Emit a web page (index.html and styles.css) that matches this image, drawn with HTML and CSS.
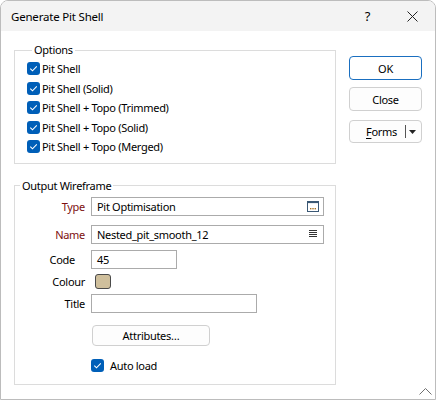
FILE: index.html
```html
<!DOCTYPE html>
<html>
<head>
<meta charset="utf-8">
<link rel="stylesheet" href="styles.css">
</head>
<body>
<div class="window">
  <div class="titlebar">
    <div class="title">Generate Pit Shell</div>
    <div class="tbtn">?</div>
    <div class="tbtn">
      <svg width="11" height="11" viewBox="0 0 11 11"><path d="M0.5 0.5 L10.5 10.5 M10.5 0.5 L0.5 10.5" stroke="#222" stroke-width="1" fill="none"/></svg>
    </div>
  </div>
  <div class="body">
    <div class="main">
      <fieldset class="options">
        <legend>Options</legend>
        <div class="chk-row"><span class="chk"><svg width="13" height="13" viewBox="0 0 13 13"><path d="M3.3 6.6 L5.5 8.8 L9.8 4.3" stroke="#fff" stroke-width="1.1" fill="none"/></svg></span><span>Pit Shell</span></div>
        <div class="chk-row"><span class="chk"><svg width="13" height="13" viewBox="0 0 13 13"><path d="M3.3 6.6 L5.5 8.8 L9.8 4.3" stroke="#fff" stroke-width="1.1" fill="none"/></svg></span><span>Pit Shell (Solid)</span></div>
        <div class="chk-row"><span class="chk"><svg width="13" height="13" viewBox="0 0 13 13"><path d="M3.3 6.6 L5.5 8.8 L9.8 4.3" stroke="#fff" stroke-width="1.1" fill="none"/></svg></span><span>Pit Shell + Topo (Trimmed)</span></div>
        <div class="chk-row"><span class="chk"><svg width="13" height="13" viewBox="0 0 13 13"><path d="M3.3 6.6 L5.5 8.8 L9.8 4.3" stroke="#fff" stroke-width="1.1" fill="none"/></svg></span><span>Pit Shell + Topo (Solid)</span></div>
        <div class="chk-row"><span class="chk"><svg width="13" height="13" viewBox="0 0 13 13"><path d="M3.3 6.6 L5.5 8.8 L9.8 4.3" stroke="#fff" stroke-width="1.1" fill="none"/></svg></span><span>Pit Shell + Topo (Merged)</span></div>
      </fieldset>
      <fieldset class="output">
        <legend>Output Wireframe</legend>
        <div class="row r-type">
          <label class="lbl req">Type</label>
          <div class="input wide"><span class="val">Pit Optimisation</span>
            <svg class="ico-browse" width="12" height="11" viewBox="0 0 12 11"><rect x="0.5" y="0.5" width="11" height="10" fill="#fff" stroke="#3a5875" stroke-width="1"/><rect x="0.5" y="0.5" width="11" height="1.6" fill="#3a5875"/><rect x="3" y="7" width="1.4" height="1.4" fill="#a87324"/><rect x="5.3" y="7" width="1.4" height="1.4" fill="#a87324"/><rect x="7.6" y="7" width="1.4" height="1.4" fill="#a87324"/></svg>
          </div>
        </div>
        <div class="row r-name">
          <label class="lbl req">Name</label>
          <div class="input wide"><span class="val">Nested_pit_smooth_12</span>
            <svg class="ico-list" width="8" height="8" viewBox="0 0 8 8"><path d="M0 0.5 H8 M0 2.5 H8 M0 4.5 H8 M0 6.5 H8" stroke="#333" stroke-width="1"/></svg>
          </div>
        </div>
        <div class="row r-code">
          <label class="lbl lbl-code">Code</label>
          <div class="input code"><span class="val">45</span></div>
        </div>
        <div class="row r-colour">
          <label class="lbl">Colour</label>
          <span class="swatch"></span>
        </div>
        <div class="row r-title">
          <label class="lbl">Title</label>
          <div class="input ttl"></div>
        </div>
        <div class="row r-attr">
          <div class="btn attr">Attributes…</div>
        </div>
        <div class="row r-auto">
          <span class="chk"><svg width="13" height="13" viewBox="0 0 13 13"><path d="M3.3 6.6 L5.5 8.8 L9.8 4.3" stroke="#fff" stroke-width="1.1" fill="none"/></svg></span><span class="auto-lbl">Auto load</span>
        </div>
      </fieldset>
    </div>
    <div class="side">
      <div class="btn ok">OK</div>
      <div class="btn close">Close</div>
      <div class="btn forms"><span class="ftxt"><u>F</u>orms</span><span class="divider"></span><svg class="arrow" width="7" height="4" viewBox="0 0 7 4"><path d="M0 0 H7 L3.5 4 Z" fill="#222"/></svg></div>
    </div>
  </div>
  <svg class="grip" width="13" height="7" viewBox="0 0 13 7"><polyline points="0.5,6.5 6.5,0.5 12.5,6.5" fill="none" stroke="#707070" stroke-width="1"/></svg>
</div>
</body>
</html>
```

FILE: styles.css
```css
* { box-sizing: border-box; }
html, body { margin: 0; padding: 0; background: #fff; }
body {
  font-family: "Noto Sans", "Open Sans", sans-serif;
  font-size: 11px;
  letter-spacing: -0.3px;
  color: #000;
}
.window {
  position: relative;
  width: 436px;
  height: 400px;
  border: 1px solid #bcbcbc;
  border-radius: 8px 8px 0 0;
  overflow: hidden;
  display: flex;
  flex-direction: column;
  background: #fff;
}
.titlebar {
  flex: none;
  height: 30px;
  background: #f3f3f3;
  display: flex;
  align-items: center;
  padding-left: 10px;
}
.title { flex: 1; font-size: 11.5px; letter-spacing: -0.2px; }
.tbtn {
  width: 45px;
  height: 30px;
  display: flex;
  align-items: center;
  justify-content: center;
  font-size: 13px;
}
.body {
  flex: 1;
  display: flex;
  padding: 11px 0 0 13px;
}
.main { width: 322px; flex: none; }
fieldset {
  margin: 0;
  padding: 0;
  border: 1px solid #dcdcdc;
  min-width: 0;
}
legend {
  padding: 0 2px;
  margin-left: 5px;
  line-height: 16px;
  height: 16px;
}
.options { padding: 1px 0 6px 12px; }
.chk-row {
  height: 19.5px;
  display: flex;
  align-items: center;
  gap: 2px;
}
.chk {
  width: 13px;
  height: 13px;
  background: #005fb8;
  border-radius: 3px;
  display: inline-flex;
  flex: none;
}
.output { margin-top: 14px; padding: 3px 0 11px 0; }
.row { display: flex; align-items: center; }
.lbl { width: 70px; text-align: right; margin-right: 6px; flex: none; }
.lbl-code { width: 60px; margin-right: 16px; }
.req { color: #7d0f0f; }
.input {
  height: 19px;
  border: 1px solid #ababab;
  background: #fff;
  display: flex;
  align-items: center;
  padding-left: 5px;
  position: relative;
}
.val { flex: 1; white-space: nowrap; }
.wide { width: 233px; }
.code { width: 86px; }
.ttl { width: 166px; }
.ico-browse { margin-right: 4px; }
.ico-list { margin-right: 6px; }
.r-type { height: 19px; }
.r-name { height: 19px; margin-top: 9px; }
.r-code { height: 19px; margin-top: 6px; }
.r-colour { height: 19px; margin-top: 3px; }
.swatch {
  margin-left: 4px;
  width: 16px;
  height: 15px;
  background: #cfbf9c;
  border: 1px solid #4a4a4a;
  border-radius: 3px;
}
.r-title { height: 19px; margin-top: 3px; }
.r-attr { margin-top: 12px; padding-left: 77px; }
.r-auto { margin-top: 12px; height: 15px; padding-left: 76px; }
.auto-lbl { margin-left: 6px; }
.btn {
  border: 1px solid #d0d0d0;
  border-radius: 4px;
  background: #fdfdfd;
  display: flex;
  align-items: center;
  justify-content: center;
}
.attr { width: 118px; height: 21px; }
.side {
  margin-left: 13px;
  width: 73px;
  flex: none;
  padding-top: 14px;
  display: flex;
  flex-direction: column;
}
.ok { height: 24px; border-color: #1a6fc0; background: #fff; }
.close { height: 24px; margin-top: 7px; }
.forms { height: 23px; margin-top: 9px; justify-content: flex-end; padding-right: 5px; }
.ftxt { margin-right: 8px; }
.ftxt u { text-decoration-thickness: 1px; text-underline-offset: 2px; }
.divider { width: 1px; height: 13px; background: #555; margin-right: 3px; }
.grip { position: absolute; right: 3px; bottom: 4px; }
```
